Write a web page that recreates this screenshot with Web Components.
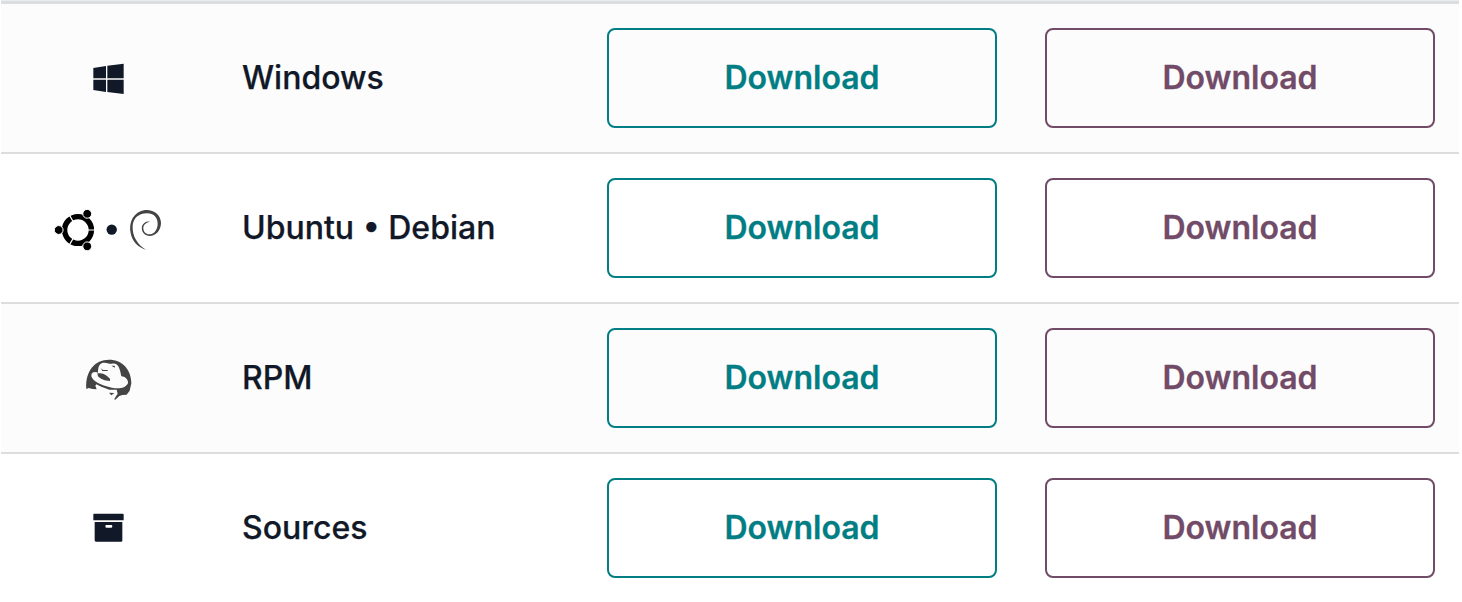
<!DOCTYPE html>
<html lang="en"><head><meta charset="utf-8"><title>Downloads</title>
<style>html,body{margin:0;background:#fff;overflow:hidden}body{font-family:Inter,"Liberation Sans",sans-serif;color:#111827}</style></head>
<body>
<download-list>
<download-row class="odd" name="Windows"><os-icon kind="windows"></os-icon></download-row>
<download-row name="Ubuntu • Debian"><os-icon kind="linux"></os-icon></download-row>
<download-row class="odd" name="RPM"><os-icon kind="rpm"></os-icon></download-row>
<download-row name="Sources"><os-icon kind="sources"></os-icon></download-row>
</download-list>
<script>
class DownloadList extends HTMLElement{constructor(){super();this.attachShadow({mode:'open'}).innerHTML=`<style>
:host{display:block;width:1458px;margin-left:1px;height:602px;box-sizing:border-box;border-top:1px solid #ebeced}
.rule{height:3px;background:#dcdddf}</style><div class="rule"></div><slot></slot>`}}
class DownloadRow extends HTMLElement{constructor(){super();this.attachShadow({mode:'open'})}
connectedCallback(){this.shadowRoot.innerHTML=`<style>
:host{display:grid;grid-template-columns:215px 367px 438px 438px;align-items:center;height:150px;box-sizing:border-box;border-bottom:2px solid #dcdddf;background:#fff}
:host(.odd){background:#fcfcfc}
:host(:last-of-type){border-bottom-color:transparent}
.icon{display:flex;justify-content:center}
.name{padding:0 0 1px 26px;font-size:32px;font-weight:500;line-height:40px;white-space:nowrap;-webkit-text-stroke:.25px currentColor}
.cell{padding:0 24px}
</style><div class="icon"><slot></slot></div><div class="name">${this.getAttribute('name')}</div>
<div class="cell"><download-button></download-button></div><div class="cell"><download-button class="plum"></download-button></div>`}}
class DownloadButton extends HTMLElement{constructor(){super();this.attachShadow({mode:'open'}).innerHTML=`<style>
:host{display:block;color:#017e84}:host(.plum){color:#714b67}
button{display:block;width:390px;height:100px;padding:0 0 1px;box-sizing:border-box;border:2px solid currentColor;border-radius:8px;background:transparent;color:inherit;font:600 32px/40px Inter,"Liberation Sans",sans-serif;-webkit-text-stroke:.3px currentColor}
</style><button>Download</button>`}}
const icons={
windows:`<svg width="60" height="60" viewBox="0 0 180 180"><path fill="#111827" d="M40 54 78 48V85H40zM82 47 131 41V85H82zM40 89H78V126L40 120zM82 89H131V132L82 126z"/></svg>`,
linux:`<svg width="120" height="60" viewBox="0 0 120 60"><circle cx="30" cy="30" r="13.4" fill="none" stroke="#000" stroke-width="5.4"/><path stroke="#fff" stroke-width="1.2" d="M30 30H48M30 30 21 14.4M30 30 21 45.6"/><g stroke="#fff" stroke-width="1"><circle cx="10.7" cy="30" r="4.4"/><circle cx="39.2" cy="13.8" r="4.4"/><circle cx="39.2" cy="46.3" r="4.4"/></g>
<circle cx="63.7" cy="29.6" r="5.2" fill="#111827"/>
<g transform="translate(52) scale(.33333)" fill="#444"><path d="M138 149C114 143 97 125 92 100C85 66 101 35 135 30C161 28 182 43 183 68C183 90 168 108 148 108C132 107 123 94 126 79C129 68 141 61 152 66C141 66 132 72 130 82C129 96 139 104 150 103C164 101 173 87 173 71C173 52 160 40 142 40C116 40 100 54 98 77C96 108 113 135 138 149Z"/></g></svg>`,
rpm:`<svg width="60" height="60" viewBox="0 0 180 180"><path fill="#444" d="M19 117C15 64 44 29 87 29C128 29 154 60 154 100L149 122 140 134 127 135 118 138 105 150 103 147 113 131 110 119 88 119 64 110 49 103 46 107 50 118 38 117 26 114Z"/><path fill="#fcfcfc" d="M54 68C54 53 57 42 67 39C79 36 86 43 96 41C114 38 119 52 124 79C138 80 145 90 144 100C134 120 103 117 79 109C53 100 32 88 34 74C37 65 46 65 54 68Z"/><path fill="#444" d="M52 70C66 68 74 72 81 78L90 86V93C75 93 61 87 54 79ZM63 55 69 60H83V63H67ZM94 47 104 47 105 53 99 50ZM87 128 103 129 99 132 94 136Z"/></svg>`,
sources:`<svg width="60" height="60" viewBox="0 0 180 180"><path fill="#111827" fill-rule="evenodd" d="M42 41H128Q131 41 131 44V61H40V44Q40 41 42 41ZM44 66H127V122Q127 125 123 125H48Q44 125 44 121ZM79 75Q76 75 76 79Q76 83 79 83H94Q97 83 97 79Q97 75 94 75Z"/></svg>`};
class OsIcon extends HTMLElement{constructor(){super();this.attachShadow({mode:'open'})}
connectedCallback(){const k=this.getAttribute('kind');this.shadowRoot.innerHTML=`<style>:host{display:block}svg{display:block;margin-top:4px;margin-left:${k==='linux'?'-1':'3'}px}</style>`+icons[k]}}
customElements.define('download-list',DownloadList);customElements.define('download-row',DownloadRow);customElements.define('download-button',DownloadButton);customElements.define('os-icon',OsIcon);
</script></body></html>
